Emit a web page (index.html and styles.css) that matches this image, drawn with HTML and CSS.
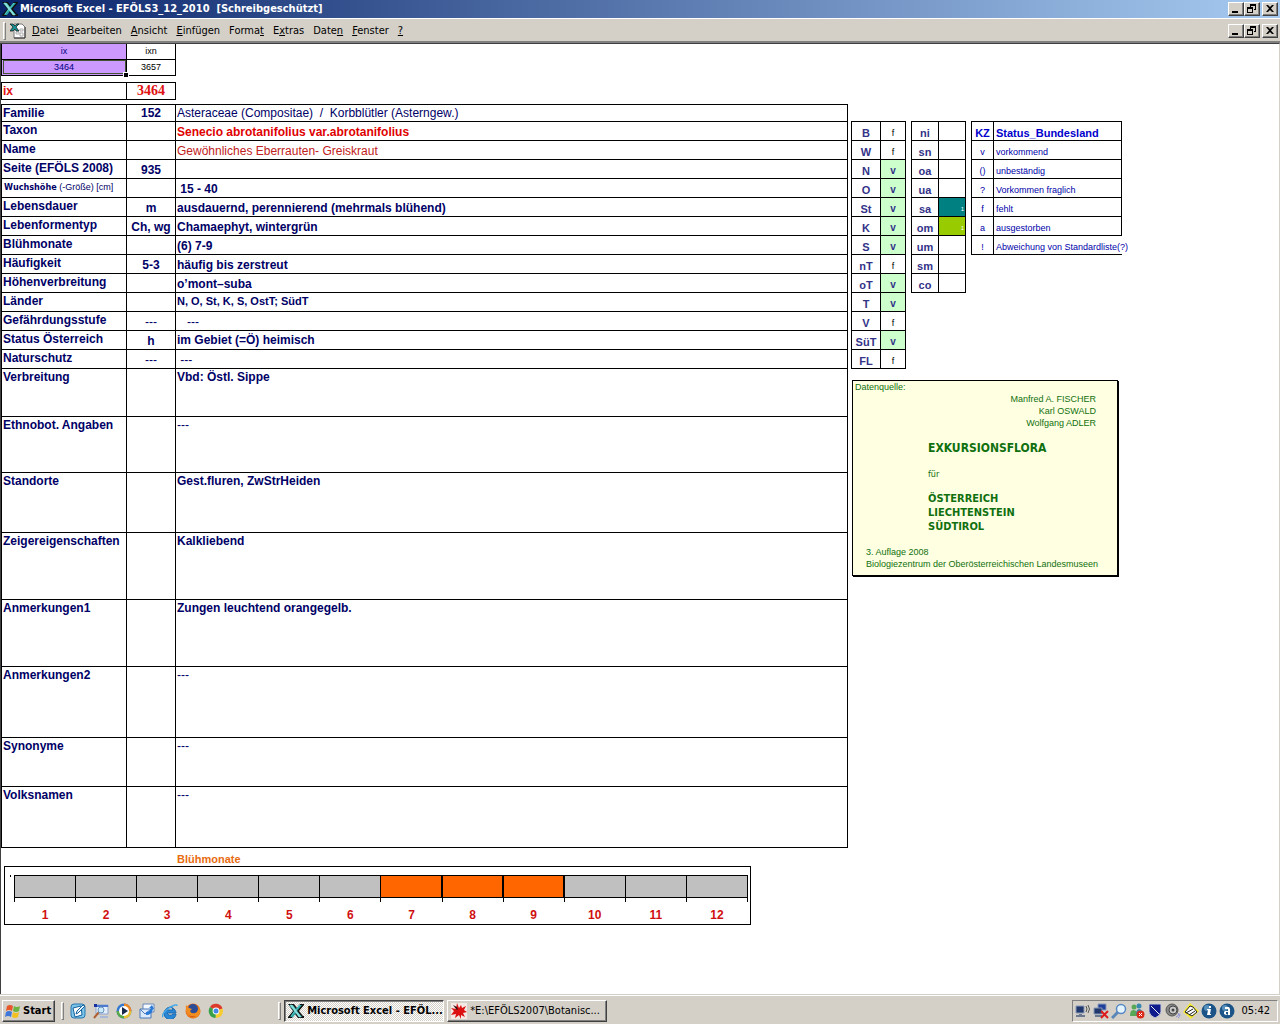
FILE: index.html
```html
<!DOCTYPE html>
<html lang="de">
<head>
    <meta charset="UTF-8">
    <meta name="viewport" content="width=device-width, initial-scale=1.0">
    <title>Microsoft Excel - EFÖLS3_12_2010</title>
    <link rel="stylesheet" href="styles.css">
</head>
<body>
    <!-- Symbole -->
    <svg class="defs" aria-hidden="true">
        <symbol id="excel" viewBox="0 0 16 16">
            <path d="M0 1h6l3 4 3-4h4v1l-5 6 4 5h1v2h-6l-3-4-3 4H0v-1l5-6z" fill="#111"/>
            <path d="M1 2h4l3 4 3-4h3L9 8l5 6h-3L8 10l-3 4H2l4-6z" fill="#2aa8a8"/>
            <path d="M2 2h2l9 12h-2zM12 2L3 13" stroke="#8ce0dc" fill="#8ce0dc" stroke-width=".5"/>
        </symbol>
        <symbol id="min" viewBox="0 0 12 10"><path d="M2 7h6v2H2z"/></symbol>
        <symbol id="restore" viewBox="0 0 12 10">
            <path d="M4 0h6v6H8V5h1V2H5v1H4zM1 3h6v6H1zM2 5v3h4V5z" fill-rule="evenodd"/>
        </symbol>
        <symbol id="close" viewBox="0 0 12 10">
            <path d="M2 1h2l2 2 2-2h2L7 4.500l3 3.500H8L6 6 4 8H2l3-3.500z"/>
        </symbol>
    </svg>

    <header class="titlebar">
        <svg class="icon"><use href="#excel"/></svg>
        <h1>Microsoft Excel - EFÖLS3_12_2010&nbsp; [Schreibgeschützt]</h1>
        <div class="controls">
            <button type="button" aria-label="Minimieren"><svg><use href="#min"/></svg></button>
            <button type="button" aria-label="Wiederherstellen"><svg><use href="#restore"/></svg></button>
            <button type="button" class="close" aria-label="Schließen"><svg><use href="#close"/></svg></button>
        </div>
    </header>

    <nav class="menubar">
        <span class="grip"></span>
        <svg class="icon doc" viewBox="0 0 16 16">
            <path d="M4 1h8l3 3v11H4z" fill="#fff" stroke="#777"/>
            <path d="M15 4v11H4" fill="none" stroke="#333"/>
            <path d="M6 9h3v2H6zM10 6h3v2h-3zM10 10h3v3h-3z" fill="none" stroke="#aaa"/>
            <path d="M0 1h3l2 2 2-2h2L6 4l3 4H6L5 6 3 8H0l3-4z" fill="#169090" stroke="#111" stroke-width=".7"/>
        </svg>
        <button type="button"><u>D</u>atei</button>
        <button type="button"><u>B</u>earbeiten</button>
        <button type="button"><u>A</u>nsicht</button>
        <button type="button"><u>E</u>infügen</button>
        <button type="button">Forma<u>t</u></button>
        <button type="button">E<u>x</u>tras</button>
        <button type="button">Date<u>n</u></button>
        <button type="button"><u>F</u>enster</button>
        <button type="button"><u>?</u></button>
        <div class="controls">
            <button type="button" aria-label="Mappe minimieren"><svg><use href="#min"/></svg></button>
            <button type="button" aria-label="Mappe wiederherstellen"><svg><use href="#restore"/></svg></button>
            <button type="button" class="close" aria-label="Mappe schließen"><svg><use href="#close"/></svg></button>
        </div>
    </nav>

    <main class="sheet">
        <section class="left">
            <table class="grid index">
                <tr><td class="key">ix</td><td>ixn</td></tr>
                <tr><td class="key selected">3464</td><td>3657</td></tr>
            </table>
            <table class="grid current">
                <tr><th>ix</th><td>3464</td></tr>
            </table>

            <!-- Datenblatt der Art -->
            <table class="grid record">
                <colgroup><col class="c-label"><col class="c-code"><col></colgroup>
                <tr class="first"><th>Familie</th><td>152</td><td class="plain">Asteraceae (Compositae)&nbsp; /&nbsp; Korbblütler (Asterngew.)</td></tr>
                <tr><th>Taxon</th><td></td><td class="red">Senecio abrotanifolius var.abrotanifolius</td></tr>
                <tr><th>Name</th><td></td><td class="name">Gewöhnliches Eberrauten- Greiskraut</td></tr>
                <tr><th>Seite (EFÖLS 2008)</th><td>935</td><td></td></tr>
                <tr><th class="small"><b>Wuchshöhe</b> (-Größe) [cm]</th><td></td><td>&nbsp;15 - 40</td></tr>
                <tr><th>Lebensdauer</th><td>m</td><td>ausdauernd, perennierend (mehrmals blühend)</td></tr>
                <tr><th>Lebenformentyp</th><td>Ch, wg</td><td>Chamaephyt, wintergrün</td></tr>
                <tr><th>Blühmonate</th><td></td><td>(6) 7-9</td></tr>
                <tr><th>Häufigkeit</th><td>5-3</td><td>häufig bis zerstreut</td></tr>
                <tr><th>Höhenverbreitung</th><td></td><td>o’mont–suba</td></tr>
                <tr><th>Länder</th><td></td><td class="lands">N, O, St, K, S, OstT; SüdT</td></tr>
                <tr><th>Gefährdungsstufe</th><td class="dash">---</td><td class="dash">&nbsp;&nbsp; ---</td></tr>
                <tr><th>Status Österreich</th><td>h</td><td class="mid">im Gebiet (=Ö) heimisch</td></tr>
                <tr><th>Naturschutz</th><td class="dash">---</td><td class="dash">&nbsp;---</td></tr>
                <tr class="tall h48"><th>Verbreitung</th><td></td><td>Vbd: Östl. Sippe</td></tr>
                <tr class="tall h56"><th>Ethnobot. Angaben</th><td></td><td class="dash">---</td></tr>
                <tr class="tall h60"><th>Standorte</th><td></td><td>Gest.fluren, ZwStrHeiden</td></tr>
                <tr class="tall h67"><th>Zeigereigenschaften</th><td></td><td>Kalkliebend</td></tr>
                <tr class="tall h67"><th>Anmerkungen1</th><td></td><td>Zungen leuchtend orangegelb.</td></tr>
                <tr class="tall h71"><th>Anmerkungen2</th><td></td><td class="dash">---</td></tr>
                <tr class="tall h49"><th>Synonyme</th><td></td><td class="dash">---</td></tr>
                <tr class="tall h61"><th>Volksnamen</th><td></td><td class="dash">---</td></tr>
            </table>

            <!-- Diagramm Blühmonate -->
            <h2>Blühmonate</h2>
            <div class="chart">
                <span class="tick"></span>
                <ol>
                    <li><i></i>1</li>
                    <li><i></i>2</li>
                    <li><i></i>3</li>
                    <li><i></i>4</li>
                    <li><i></i>5</li>
                    <li><i></i>6</li>
                    <li class="on"><i></i>7</li>
                    <li class="on"><i></i>8</li>
                    <li class="on"><i></i>9</li>
                    <li><i></i>10</li>
                    <li><i></i>11</li>
                    <li><i></i>12</li>
                </ol>
            </div>
        </section>

        <aside class="right">
            <div class="tables">
                <table class="grid codes">
                    <colgroup><col class="c-land"><col></colgroup>
                    <tr><th>B</th><td>f</td></tr>
                    <tr><th>W</th><td>f</td></tr>
                    <tr><th>N</th><td class="v">v</td></tr>
                    <tr><th>O</th><td class="v">v</td></tr>
                    <tr><th>St</th><td class="v">v</td></tr>
                    <tr><th>K</th><td class="v">v</td></tr>
                    <tr><th>S</th><td class="v">v</td></tr>
                    <tr><th>nT</th><td>f</td></tr>
                    <tr><th>oT</th><td class="v">v</td></tr>
                    <tr><th>T</th><td class="v">v</td></tr>
                    <tr><th>V</th><td>f</td></tr>
                    <tr><th>SüT</th><td class="v">v</td></tr>
                    <tr><th>FL</th><td>f</td></tr>
                </table>
                <table class="grid codes">
                    <colgroup><col class="c-zone"><col></colgroup>
                    <tr><th>ni</th><td></td></tr>
                    <tr><th>sn</th><td></td></tr>
                    <tr><th>oa</th><td></td></tr>
                    <tr><th>ua</th><td></td></tr>
                    <tr><th>sa</th><td class="mark teal">1</td></tr>
                    <tr><th>om</th><td class="mark lime">1</td></tr>
                    <tr><th>um</th><td></td></tr>
                    <tr><th>sm</th><td></td></tr>
                    <tr><th>co</th><td></td></tr>
                </table>
                <table class="grid legend">
                    <colgroup><col class="c-kz"><col></colgroup>
                    <tr><th>KZ</th><th>Status_Bundesland</th></tr>
                    <tr><td>v</td><td>vorkommend</td></tr>
                    <tr><td>()</td><td>unbeständig</td></tr>
                    <tr><td>?</td><td>Vorkommen fraglich</td></tr>
                    <tr><td>f</td><td>fehlt</td></tr>
                    <tr><td>a</td><td>ausgestorben</td></tr>
                    <tr><td>!</td><td class="open">Abweichung von Standardliste(?)</td></tr>
                </table>
            </div>

            <div class="source">
                <p class="caption">Datenquelle:</p>
                <p class="authors">Manfred A. FISCHER<br>Karl OSWALD<br>Wolfgang ADLER</p>
                <div class="book">
                    <h3>EXKURSIONSFLORA</h3>
                    <p>für</p>
                    <h4>ÖSTERREICH<br>LIECHTENSTEIN<br>SÜDTIROL</h4>
                </div>
                <p class="edition">3. Auflage 2008<br>Biologiezentrum der Oberösterreichischen Landesmuseen</p>
            </div>
        </aside>
    </main>

    <footer class="taskbar">
        <button type="button" class="start">
            <svg class="icon" viewBox="0 0 16 16">
                <path d="M2 3q3-2 6 0L7 8Q4 6 1 8z" fill="#e8562a"/>
                <path d="M9 3q3 2 6 0l-1 5q-3 2-6 0z" fill="#6db33f"/>
                <path d="M1 9q3-2 6 0l-1 5q-3-2-6 0z" fill="#3f78d8"/>
                <path d="M8 9q3 2 6 0l-1 5q-3 2-6 0z" fill="#f4c020"/>
            </svg>
            Start
        </button>
        <span class="sep"></span>
        <div class="quick">
            <button type="button" aria-label="Desktop anzeigen"><svg viewBox="0 0 16 16">
                <rect x="1" y="1" width="14" height="14" rx="3" fill="#7cc4e8" stroke="#2877b0"/>
                <path d="M3 5l8-2 1 9-7 2z" fill="#fff" stroke="#18609c"/><path d="M6 11l1-3 6-6 2 1-7 7z" fill="#e8f6ff" stroke="#18609c"/>
            </svg></button>
            <button type="button" aria-label="Suche"><svg viewBox="0 0 16 16">
                <path d="M3 2h12v9H3z" fill="#e4eefc" stroke="#8ca4cc"/><path d="M3 2h12v2H3z" fill="#4c78d0"/>
                <path d="M1 1h3v3H1z" fill="#1830a0"/><path d="M7 13h8v2H7z" fill="#a8b8d8"/>
                <path d="M1 15l5-6" stroke="#b06030" stroke-width="2"/><circle cx="8" cy="7" r="3" fill="#c8e8fc" stroke="#6890b8"/>
            </svg></button>
            <button type="button" aria-label="Media Player"><svg viewBox="0 0 16 16">
                <circle cx="8" cy="8" r="7.500" fill="#3478d0"/><path d="M8 .5A7.500 7.500 0 0 1 15.500 8H8z" fill="#f08828"/>
                <path d="M15.500 8A7.500 7.500 0 0 1 8 15.500V8z" fill="#e8c030"/><path d="M8 15.500A7.500 7.500 0 0 1 .5 8H8z" fill="#58a848"/>
                <circle cx="8" cy="8" r="5" fill="#fff"/><path d="M6 4l6 4-6 4z" fill="#182848"/>
            </svg></button>
            <button type="button" aria-label="Outlook Express"><svg viewBox="0 0 16 16">
                <path d="M4 1h11v8H4z" fill="#f4f8ff" stroke="#6888b8"/><path d="M1 6h11v9H1z" fill="#dceafc" stroke="#4878b8"/>
                <path d="M1 6l5 5 6-5" fill="none" stroke="#4878b8"/><path d="M7 9q4 0 5-4l-2 0 3-3 2 4h-1q-1 6-7 6z" fill="#2878d8"/>
            </svg></button>
            <button type="button" aria-label="Internet Explorer"><svg viewBox="0 0 16 16">
                <path d="M14 10H5a3.500 3.500 0 0 0 6 1h3a6 6 0 1 1 0-1zM5 7h6a3 3 0 0 0-6 0z" fill="#2888d8" stroke="#1868b0"/>
                <path d="M1 14q-2-3 6-9 8-5 8-2" fill="none" stroke="#48a8e8" stroke-width="1.500"/>
            </svg></button>
            <button type="button" aria-label="Firefox"><svg viewBox="0 0 16 16">
                <circle cx="8" cy="8" r="7.500" fill="#e8701c"/><circle cx="8" cy="6" r="5" fill="#2c4c98"/>
                <path d="M1 2l3 3 3 1-2 2q1 3 5 2 4-1 3-7 4 5 1 9-4 5-9 2Q0 11 1 2z" fill="#f08c20"/><path d="M2 9q3 6 9 4-5 4-9-4z" fill="#c83c10"/>
            </svg></button>
            <button type="button" aria-label="Chrome"><svg viewBox="0 0 16 16">
                <path d="M8 8L2 4a7 7 0 0 1 12.500 1.500z" fill="#dc3c2c"/><path d="M8 8l6.500-2.500A7 7 0 0 1 7.500 15z" fill="#f8cc30"/>
                <path d="M8 8l-.5 7A7 7 0 0 1 2 4z" fill="#38a048"/><circle cx="8" cy="8" r="3.400" fill="#fff"/><circle cx="8" cy="8" r="2.500" fill="#4488e8"/>
            </svg></button>
        </div>
        <span class="sep"></span>
        <div class="tasks">
            <button type="button" class="task active"><svg class="icon"><use href="#excel"/></svg>Microsoft Excel - EFÖL...</button>
            <button type="button" class="task"><svg class="icon" viewBox="0 0 16 16">
                <path d="M0 0h16v16H0z" fill="#f4e8e4"/>
                <path d="M6 0l2 5 2-3 1 3 4-2-2 4 3 2-4 1 2 4-4-2v4l-2-4-4 3 1-4-5 1 3-4-3-3 5 1z" fill="#dc1010"/><path d="M2 2l3 4 2 1-1-3z" fill="#301010"/>
            </svg>*E:\EFÖLS2007\Botanisc...</button>
        </div>
        <div class="tray">
            <svg viewBox="0 0 16 16"><path d="M1 3h8v7H1z" fill="#20386c" stroke="#8898b8"/><path d="M4 11h3v1h3v2H1v-2h3z" fill="#6c7890"/><path d="M11 3q2 3 0 6M13 2q3 4 0 8" fill="none" stroke="#555"/></svg>
            <svg viewBox="0 0 16 16"><path d="M5 1h8v6H5z" fill="#20409c" stroke="#8898b8"/><path d="M1 5h8v6H1z" fill="#20386c" stroke="#8898b8"/><path d="M2 12h7v2H2z" fill="#6c7890"/><path d="M8 8l7 7M15 8l-7 7" stroke="#dc1c1c" stroke-width="2"/></svg>
            <svg viewBox="0 0 16 16"><path d="M1 15l6-6" stroke="#5888b8" stroke-width="3"/><circle cx="10" cy="6" r="4.500" fill="#e4f4ff" stroke="#5888c0" stroke-width="1.500"/></svg>
            <svg viewBox="0 0 16 16"><circle cx="5" cy="4" r="2.500" fill="#58a858"/><path d="M1 13q0-7 4-6t4 6z" fill="#58a858"/><circle cx="10" cy="3" r="2.500" fill="#3888b0"/><path d="M7 12q0-6 3-6t4 5z" fill="#3888b0"/><circle cx="11.500" cy="11.500" r="4" fill="#dc2c1c"/><path d="M10 10l3 3M13 10l-3 3" stroke="#fff"/></svg>
            <svg viewBox="0 0 16 16"><path d="M2 1h12v8q-1 4-6 6-5-2-6-6z" fill="#101c8c" stroke="#c8ccd8"/><path d="M4 3l8 8" stroke="#e8ecf8"/></svg>
            <svg viewBox="0 0 16 16"><circle cx="7" cy="7" r="6" fill="#888" stroke="#555"/><circle cx="8" cy="7" r="4" fill="#c8c8c8" stroke="#444"/><circle cx="8" cy="7" r="1.500" fill="#444"/><path d="M11 14q3-1 3-4M13 15q2-1 2-4" fill="none" stroke="#8c90dc"/></svg>
            <svg viewBox="0 0 16 16"><path d="M7 0l9 8-8 8-8-7z" fill="#f8ec30"/><path d="M2 9l5-6 3 1 4 5-5 4z" fill="#fff" stroke="#222"/><path d="M3 10l7-4M6 12l6-4" stroke="#222"/></svg>
            <svg viewBox="0 0 16 16"><circle cx="8" cy="8" r="7.500" fill="#1c5488"/><circle cx="6" cy="5" r="3" fill="#5890bc"/><path d="M8 3h2v2H8zM6 6h4l-1 5h1v1H6l1-5H6z" fill="#fff"/></svg>
            <svg viewBox="0 0 16 16"><circle cx="8" cy="8" r="7.500" fill="#1c5488"/><circle cx="6" cy="5" r="3" fill="#5890bc"/><path d="M6 4h4l1 2v6H9v-1l-2 1-2-1V9l1-1h3V6H6zM7 9v2h2V9z" fill="#fff"/></svg>
            <time>05:42</time>
        </div>
    </footer>
</body>
</html>
```

FILE: styles.css
```css
* {
    box-sizing: border-box;
}
body {
    display: flex;
    flex-direction: column;
    min-height: 100vh;
    margin: 0;
    background: #d4d0c8;
    font: 11px/14px "DejaVu Sans Condensed", "DejaVu Sans", sans-serif;
    color: #000;
}
h1, h2, h3, h4, p, ol {
    margin: 0;
    padding: 0;
    font-size: inherit;
}
button {
    margin: 0;
    padding: 0;
    border: 0;
    background: none;
    font: inherit;
    color: inherit;
}
.defs {
    position: absolute;
    width: 0;
    height: 0;
}
.icon {
    flex: none;
    width: 16px;
    height: 16px;
}

/* Titel und Menü */
.titlebar {
    display: flex;
    align-items: center;
    gap: 2px;
    height: 18px;
    padding: 0 2px;
    background: linear-gradient(to right, #0a246a, #a6caf0);
    color: #fff;
}
.controls {
    display: flex;
    margin-left: auto;
}
.controls button {
    display: flex;
    align-items: center;
    justify-content: center;
    width: 16px;
    height: 14px;
    background: #d4d0c8;
    border: 1px solid;
    border-color: #fff #404040 #404040 #fff;
    box-shadow: inset -1px -1px #808080;
}
.controls .close {
    margin-left: 2px;
}
.controls svg {
    width: 12px;
    height: 10px;
}
.menubar {
    display: flex;
    align-items: center;
    gap: 1px;
    height: 25px;
    padding: 1px 2px 0;
    border-top: 1px solid #fff;
    border-bottom: 2px solid #808080;
}
.menubar > button {
    padding: 1px 4px 0;
}
.menubar .controls {
    gap: 0;
}
.grip {
    width: 3px;
    height: 18px;
    margin: 0 3px 0 1px;
    border: 1px solid;
    border-color: #fff #808080 #808080 #fff;
}
.doc {
    margin-right: 1px;
}

/* Tabellenblatt */
.sheet {
    display: flex;
    flex: 1;
    align-items: flex-start;
    background: #fff;
    border: 1px solid #d4d0c8;
    border-top-color: #404040;
    border-left-color: #404040;
    font-family: "Liberation Sans", Arial, sans-serif;
}
.left {
    flex: 1;
    min-width: 0;
}
.right {
    flex: none;
    width: 431px;
    padding: 77px 0 0 3px;
}
.grid {
    border-collapse: collapse;
    table-layout: fixed;
}
.grid th, .grid td {
    padding: 0 1px;
    border: 1px solid #000;
}
.index, .current {
    width: 175px;
    text-align: center;
}
.index td {
    height: 16px;
    font-size: 9px;
    line-height: 14px;
}
.index tr:first-child td {
    height: 15px;
    border-top: 0;
}
.index td:first-child, .current th {
    width: 125px;
}
.index .key {
    background: #cc99ff;
    color: #000080;
}
.index .selected {
    position: relative;
    outline: 1px solid #445533;
    outline-offset: -2px;
}
/* Ausfüllkästchen */
.index .selected::after {
    content: "";
    position: absolute;
    right: -2px;
    bottom: -2px;
    width: 4px;
    height: 4px;
    background: #000;
    box-shadow: 0 0 0 1px #fff;
}
.current {
    margin: 6px 0 4px;
    color: #e01010;
}
.current th {
    height: 17px;
    text-align: left;
    font-size: 12px;
}
.current td {
    font: bold 14px/16px "Liberation Serif", serif;
}

.record {
    width: 100%;
    color: #000066;
    font-size: 12px;
    line-height: 16px;
}
.c-label {
    width: 125px;
}
.c-code {
    width: 49px;
}
.record tr {
    height: 19px;
}
.record .first {
    height: 17px;
}
.record th {
    text-align: left;
    vertical-align: top;
    white-space: nowrap;
}
.record td {
    vertical-align: bottom;
    font-weight: bold;
}
.record td:nth-child(2) {
    text-align: center;
}
.record .small {
    padding-left: 2px;
    font-size: 9px;
    font-weight: normal;
}
.record .small b {
    font-family: "DejaVu Sans Condensed", "DejaVu Sans", sans-serif;
}
.record .plain, .record .name, .record .dash {
    font-weight: normal;
}
.record .red {
    color: #e00000;
}
.record .name {
    color: #c02020;
}
.record .lands {
    vertical-align: top;
    font-size: 11px;
}
.record .mid {
    vertical-align: middle;
}
.record .tall td {
    vertical-align: top;
}
.record .h48 { height: 48px; }
.record .h49 { height: 49px; }
.record .h56 { height: 56px; }
.record .h60 { height: 60px; }
.record .h61 { height: 61px; }
.record .h67 { height: 67px; }
.record .h71 { height: 71px; }

/* Diagramm */
h2 {
    padding: 4px 0 0 176px;
    color: #e86c10;
    font-size: 11px;
}
.chart {
    position: relative;
    margin: 0 97px 0 3px;
    padding: 8px 2px 0 9px;
    border: 1px solid #000;
}
.tick {
    position: absolute;
    top: 8px;
    left: 5px;
    width: 1px;
    height: 2px;
    background: #000;
}
.chart ol {
    display: grid;
    grid-template-columns: repeat(12, 1fr);
    height: 49px;
    list-style: none;
    color: #d01010;
    font-size: 12px;
    font-weight: bold;
    text-align: center;
    border-style: solid;
    border-width: 0 1px 0 0;
    border-image: linear-gradient(#000 27px, transparent 27px) 1;
}
.chart i {
    display: block;
    height: 23px;
    margin-bottom: 10px;
    background: #c0c0c0;
    border: solid #000;
    border-width: 1px 0;
}
.chart li {
    border-left: 1px solid;
    border-image: linear-gradient(#000 27px, transparent 27px) 1;
}
.chart .on i {
    background: #ff6600;
    border-right-width: 1px;
}

/* Codes und Legende */
.tables {
    display: flex;
    align-items: flex-start;
    gap: 5px;
}
.codes, .legend {
    line-height: 14px;
    text-align: center;
}
.codes {
    width: 55px;
    font-size: 9px;
}
.c-land {
    width: 29px;
}
.c-zone {
    width: 27px;
}
.c-kz {
    width: 22px;
}
.codes tr, .legend tr {
    height: 19px;
}
.codes th, .codes td, .legend th, .legend td {
    vertical-align: bottom;
}
.codes th {
    color: #333388;
    font-size: 11px;
}
.codes .v {
    background: #ccffcc;
    color: #333388;
    font-weight: bold;
    font-size: 10px;
}
.codes .mark {
    color: #fff;
    font-size: 6px;
    text-align: right;
}
.codes .teal {
    background: #008080;
}
.codes .lime {
    background: #99cc00;
}
.legend {
    width: 151px;
    color: #0000aa;
    font-size: 9px;
    white-space: nowrap;
}
.legend th {
    color: #0000cc;
    font-size: 11px;
}
.legend th + th, .legend td + td {
    padding-left: 2px;
    text-align: left;
}
.legend .open {
    border-right: 0;
}

/* Quellenangabe */
.source {
    width: 266px;
    margin: 11px 0 0 1px;
    padding: 1px 13px 5px;
    background: #ffffe1;
    border: 1px solid #000;
    box-shadow: 1px 1px #000;
    color: #107010;
    font-size: 9px;
    line-height: 12px;
}
.caption {
    margin-left: -11px;
    line-height: 11px;
}
.authors {
    padding-right: 8px;
    text-align: right;
}
.book {
    padding: 10px 0 12px 62px;
    font-family: "DejaVu Sans Condensed", "DejaVu Sans", sans-serif;
}
.book h3 {
    padding: 2px 0 13px;
    font-size: 12px;
    line-height: 14px;
}
.book h4 {
    padding-top: 12px;
    font-size: 11px;
    line-height: 14px;
}

/* Taskleiste */
.taskbar {
    display: flex;
    align-items: center;
    height: 29px;
    padding: 3px 2px 1px;
    border-top: 1px solid #fff;
    box-shadow: 0 -1px #d4d0c8;
}
.start, .task {
    display: flex;
    align-items: center;
    height: 22px;
    border: 1px solid;
    border-color: #fff #404040 #404040 #fff;
    box-shadow: inset -1px -1px #808080;
}
.start {
    gap: 2px;
    padding: 0 3px 0 2px;
    font-weight: bold;
}
.sep {
    width: 3px;
    height: 18px;
    margin: 0 6px;
    border: 1px solid;
    border-color: #fff #808080 #808080 #fff;
}
.quick {
    display: flex;
    gap: 7px;
    width: 202px;
}
.quick + .sep {
    margin-right: 3px;
}
.quick svg {
    display: block;
    width: 16px;
    height: 16px;
}
.tasks {
    display: flex;
    gap: 3px;
}
.task {
    gap: 3px;
    width: 160px;
    padding: 0 3px;
    white-space: nowrap;
}
.task.active {
    background: repeating-conic-gradient(#fff 0 25%, #d4d0c8 0 50%) 0 0 / 2px 2px;
    border-color: #404040 #fff #fff #404040;
    box-shadow: inset 1px 1px #808080;
    font-weight: bold;
}
.tray {
    display: flex;
    align-items: center;
    gap: 2px;
    height: 22px;
    margin-left: auto;
    padding: 0 7px 0 2px;
    border: 1px solid;
    border-color: #808080 #fff #fff #808080;
}
.tray svg {
    width: 16px;
    height: 16px;
}
.tray time {
    padding-left: 4px;
}
```
